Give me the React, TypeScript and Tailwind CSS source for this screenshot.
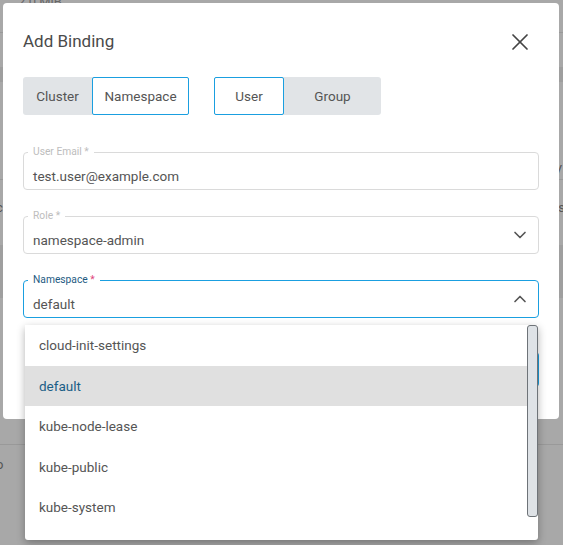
import React from "react";

const font = { fontFamily: "Roboto, 'Liberation Sans', sans-serif" };

function Chevron({ up }: { up?: boolean }) {
  return (
    <svg width="20" height="20" viewBox="0 0 24 24" fill="none" stroke="#555" strokeWidth="2" strokeLinecap="round" strokeLinejoin="round">
      {up ? <path d="m6 15 6-6 6 6" /> : <path d="m6 9 6 6 6-6" />}
    </svg>
  );
}

function Field({
  label,
  value,
  focused,
  select,
  up,
}: {
  label: string;
  value: string;
  focused?: boolean;
  select?: boolean;
  up?: boolean;
}) {
  return (
    <div
      className={`relative h-[38px] rounded-[4px] border ${
        focused ? "border-[#1a9fe0]" : "border-[#dadada]"
      } flex items-center`}
    >
      <span
        className={`absolute left-[4px] top-[-7px] bg-white px-[5px] text-[10.25px] leading-[12px] ${
          focused ? "text-[#1e5a82]" : "text-[#bdbdbd]"
        }`}
      >
        {label}
        <span className={focused ? "text-[#e0457b]" : ""}> *</span>
      </span>
      <span className="pl-[9px] pt-[9px] flex-1 text-[13.5px] leading-5 text-[#555]">{value}</span>
      {select && (
        <span className="pr-[8px] flex items-center">
          <Chevron up={up} />
        </span>
      )}
    </div>
  );
}

export default function App() {
  const items = ["cloud-init-settings", "default", "kube-node-lease", "kube-public", "kube-system"];
  return (
    <div className="relative w-[563px] h-[545px] overflow-hidden bg-[#a8a8a8]" style={font}>
      {/* underlying page */}
      <div className="flex flex-col w-full h-full">
        <div className="h-[33px] border-b border-[#999] text-[13px] text-[#666] pl-[18px] leading-[8px]">
          <span className="relative top-[-2px]">2.0 MiB</span>
        </div>
        <div className="h-[34px]" />
        <div className="h-[15px] bg-[#9e9e9e]" />
        <div className="h-[98px] border-b border-[#999] flex justify-end items-end pr-[1px] pb-[1px] text-[13px] text-[#555] leading-4">
          V
        </div>
        <div className="h-[65px] flex justify-between pt-[20px] text-[13px] text-[#555] leading-4 ml-[-4px] mr-[-2px]">
          <span>c</span>
          <span>s</span>
        </div>
        <div className="h-[53px] bg-[#9f9f9f]" />
        <div className="h-[147px] border-b border-[#999]" />
        <div className="text-[13px] text-[#555] pt-[12px] ml-[-4px] leading-4">o</div>
      </div>

      {/* dialog */}
      <div className="absolute left-[3px] top-[3px] w-[556px] h-[416px] bg-white rounded-[4px] px-[20px] pt-[27px] flex flex-col">
        <div className="h-6 flex items-center justify-between">
          <span className="text-[17px] text-[#4a4a4a]">Add Binding</span>
          <svg width="28" height="28" viewBox="0 0 24 24" fill="none" stroke="#444" strokeWidth="1.5" strokeLinecap="round" className="mr-[5px]">
            <path d="M18 6 6 18" />
            <path d="m6 6 12 12" />
          </svg>
        </div>

        <div className="mt-[23px] flex gap-[25px]">
          <div className="flex h-[38px] rounded-[3px] bg-[#e1e4e7] text-[13.5px] text-[#555]">
            <div className="w-[69px] flex items-center justify-center">Cluster</div>
            <div className="w-[97px] flex items-center justify-center bg-white border border-[#1a9fe0] rounded-[2px]">
              Namespace
            </div>
          </div>
          <div className="flex h-[38px] rounded-[3px] bg-[#e1e4e7] text-[13.5px] text-[#555]">
            <div className="w-[70px] flex items-center justify-center bg-white border border-[#1a9fe0] rounded-[2px]">
              User
            </div>
            <div className="w-[97px] flex items-center justify-center">Group</div>
          </div>
        </div>

        <div className="mt-[37px] flex flex-col gap-[26px]">
          <Field label="User Email" value="test.user@example.com" />
          <Field label="Role" value="namespace-admin" select />
          <Field label="Namespace" value="default" select up focused />
        </div>

        <div className="mt-[34px] flex justify-end">
          <div className="h-[35px] w-[90px] rounded-[4px] bg-[#1a9fe0]" />
        </div>
      </div>

      {/* dropdown */}
      <div className="absolute left-[25px] top-[325px] w-[513px] h-[215px] bg-white rounded-b-[3px] shadow-[0_3px_8px_rgba(0,0,0,0.3)] flex">
        <div className="flex-1 flex flex-col">
          {items.map((it) => (
            <div
              key={it}
              className={`h-[40.5px] flex items-center pl-[14px] text-[13.5px] ${
                it === "default" ? "bg-[#e0e0e0] text-[#1b5e87]" : "text-[#555]"
              }`}
            >
              {it}
            </div>
          ))}
        </div>
        <div className="w-[11px] flex flex-col">
          <div className="h-[192px] rounded-[3px] border border-[#6e7378] bg-[#dee2e6]" />
        </div>
      </div>
    </div>
  );
}
